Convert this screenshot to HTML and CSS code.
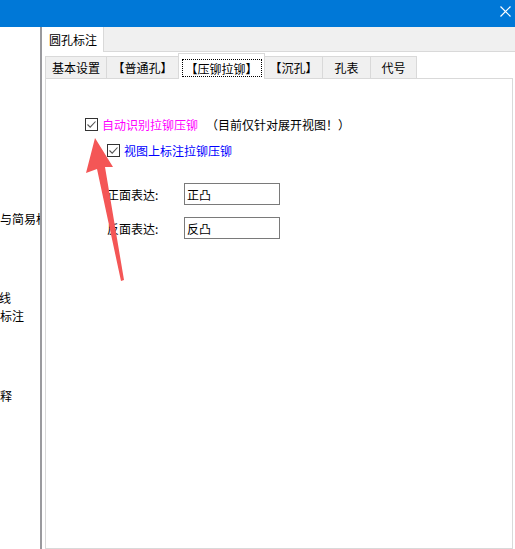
FILE: index.html
```html
<!DOCTYPE html>
<html lang="zh-CN">
<head>
    <meta charset="UTF-8">
    <meta name="viewport" content="width=device-width, initial-scale=1.0">
    <title>圆孔标注</title>
    <link rel="stylesheet" href="styles.css">
</head>
<body>
    <div class="titlebar">
        <svg class="close" width="11" height="11" viewBox="0 0 11 11">
            <path d="M0.5 0.5 L10.5 10.5 M10.5 0.5 L0.5 10.5" stroke="#fff" stroke-width="1.2" fill="none"/>
        </svg>
    </div>

    <div class="main">
        <div class="side">
            <div class="side-line line-a">与简易标注</div>
            <div class="side-line line-b">线</div>
            <div class="side-line line-c">标注</div>
            <div class="side-line line-d">释</div>
        </div>

        <div class="dialog">
            <div class="outer-tabs">
                <div class="outer-tab">圆孔标注</div>
                <div class="outer-rest"></div>
            </div>

            <div class="outer-page">
                <div class="inner-tabs">
                    <div class="tab t1">基本设置</div>
                    <div class="tab t2">【普通孔】</div>
                    <div class="tab t3 selected"><span class="focus">【压铆拉铆】</span></div>
                    <div class="tab t4">【沉孔】</div>
                    <div class="tab t5">孔表</div>
                    <div class="tab t6">代号</div>
                </div>

                <div class="panel">
                    <div class="row row-auto">
                        <span class="check">
                            <svg width="11" height="11" viewBox="0 0 11 11"><path d="M1.5 5.5 L4.2 8.2 L9.5 2.5" stroke="#555" stroke-width="1.1" fill="none"/></svg>
                        </span>
                        <span class="magenta">自动识别拉铆压铆</span><span class="note">（目前仅针对展开视图！）</span>
                    </div>
                    <div class="row row-view">
                        <span class="check">
                            <svg width="11" height="11" viewBox="0 0 11 11"><path d="M1.5 5.5 L4.2 8.2 L9.5 2.5" stroke="#555" stroke-width="1.1" fill="none"/></svg>
                        </span>
                        <span class="blue">视图上标注拉铆压铆</span>
                    </div>
                    <div class="row row-field first">
                        <span class="field-label">正面表达:</span>
                        <input class="field" type="text" value="正凸">
                    </div>
                    <div class="row row-field">
                        <span class="field-label">反面表达:</span>
                        <input class="field" type="text" value="反凸">
                    </div>
                </div>
            </div>
        </div>
    </div>

    <svg class="arrow" width="515" height="549" viewBox="0 0 515 549">
        <polygon points="95,138 113,167 105,167 124,280 121,281 97,169 86,173" fill="#f45656"/>
    </svg>
</body>
</html>
```

FILE: styles.css
```css
body {
    margin: 0;
    width: 515px;
    height: 549px;
    overflow: hidden;
    font-family: "Noto Sans CJK SC", "Microsoft YaHei", sans-serif;
    font-size: 12px;
    color: #000;
    background-color: #fff;
    position: relative;
}
.titlebar {
    height: 27px;
    background-color: #0078d7;
    display: flex;
    justify-content: flex-end;
    align-items: center;
    padding-right: 4px;
}
.close {
    display: block;
    margin-top: -5px;
}
.main {
    display: flex;
    height: 522px;
}
.side {
    width: 40px;
    border-right: 2px solid #9a9a9e;
    background-color: #fff;
    overflow: hidden;
    flex-shrink: 0;
}
.side-line {
    white-space: nowrap;
    line-height: 16px;
}
.line-a { margin-top: 184px; }
.line-b { margin-top: 63px; margin-left: -1px; }
.line-c { margin-top: 2px; }
.line-d { margin-top: 64px; }
.dialog {
    flex: 1;
    display: flex;
    flex-direction: column;
    background-color: #f0f0f0;
}
.outer-tabs {
    display: flex;
    height: 25px;
}
.outer-tab {
    width: 62px;
    background-color: #fff;
    border-right: 1px solid #d9d9d9;
    display: flex;
    align-items: center;
    padding-left: 7px;
    box-sizing: border-box;
}
.outer-rest {
    flex: 1;
    border-bottom: 1px solid #d9d9d9;
}
.outer-page {
    flex: 1;
    background-color: #fff;
    padding: 1px 2px 0 3px;
    display: flex;
    flex-direction: column;
}
.inner-tabs {
    display: flex;
    align-items: flex-end;
    height: 25px;
}
.tab {
    height: 22px;
    box-sizing: border-box;
    background-color: #f0f0f0;
    border: 1px solid #d9d9d9;
    border-bottom: none;
    display: flex;
    align-items: center;
    justify-content: center;
    margin-left: -1px;
}
.t1 { width: 62px; margin-left: 0; }
.t2 { width: 73px; }
.t3 { width: 87px; }
.t4 { width: 59px; }
.t5 { width: 49px; }
.t6 { width: 47px; }
.tab.selected {
    height: 26px;
    background-color: #fff;
    margin-bottom: -1px;
    position: relative;
    z-index: 1;
    padding-top: 2px;
}
.focus {
    border: 1px dotted #000;
    padding: 2px 1px 1px 1px;
    width: 80px;
    height: 18px;
    box-sizing: border-box;
    display: flex;
    align-items: center;
    justify-content: center;
}
.panel {
    flex: 1;
    border: 1px solid #d9d9d9;
    background-color: #fff;
    padding-top: 38px;
}
.row {
    display: flex;
    align-items: center;
    white-space: nowrap;
}
.row-auto {
    padding-left: 39px;
    height: 14px;
}
.row-view {
    padding-left: 61px;
    margin-top: 12px;
    height: 14px;
}
.check {
    width: 13px;
    height: 13px;
    box-sizing: border-box;
    border: 1px solid #333;
    background-color: #fff;
    display: flex;
    align-items: center;
    justify-content: center;
    margin-right: 4px;
}
.check svg {
    display: block;
}
.magenta {
    color: #ff00ff;
}
.blue {
    color: #0000ff;
}
.note {
    padding-left: 8px;
}
.row-field {
    padding-left: 61px;
    margin-top: 12px;
}
.row-field.first {
    margin-top: 26px;
}
.field-label {
    width: 77px;
}
.field {
    width: 96px;
    height: 22px;
    box-sizing: border-box;
    border: 1px solid #7a7a7a;
    padding: 0 2px;
    margin: 0;
    font-family: inherit;
    font-size: 12px;
    color: #000;
    outline: none;
}
.arrow {
    position: absolute;
    left: 0;
    top: 0;
    pointer-events: none;
}
```
